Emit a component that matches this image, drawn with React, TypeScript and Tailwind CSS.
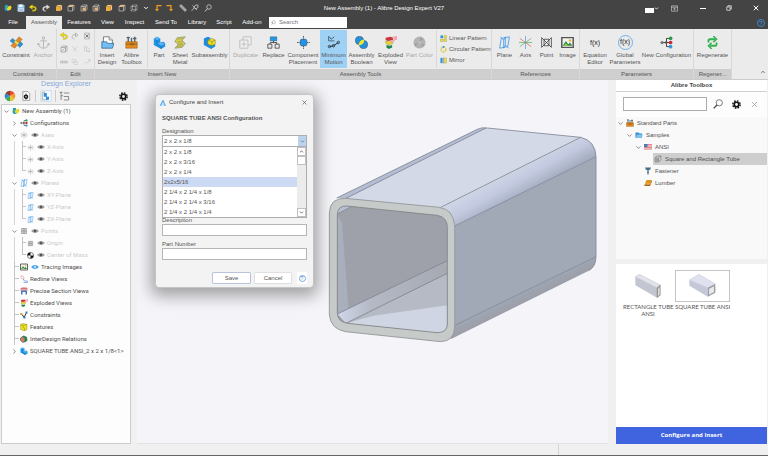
import type { ReactNode } from 'react'
import clsx from 'clsx'
import { ChevronDown, ChevronRight, ChevronUp, Search, X } from 'lucide-react'

type IconName = keyof typeof glyphs

const glyphs = {
  pie: (
    <>
      <path d="M8 8V1a7 7 0 0 1 6.1 3.5z" fill="#ef4a34" />
      <path d="M8 8l6.1-3.5a7 7 0 0 1 0 7z" fill="#f29a2e" />
      <path d="M8 8l6.1 3.5A7 7 0 0 1 8 15z" fill="#e2c92b" />
      <path d="M8 8v7a7 7 0 0 1-6.1-3.5z" fill="#3fae49" />
      <path d="M8 8l-6.1 3.5a7 7 0 0 1 0-7z" fill="#2c86d1" />
      <path d="M8 8L1.9 4.5A7 7 0 0 1 8 1z" fill="#8a3f2b" />
    </>
  ),
  app: (
    <>
      <path d="M2 2h6v4H6v4h3v4H4L1 11z" fill="#2196d8" />
      <path d="M8 5l5-2 2 4-2 5-5 1-3-3z" fill="#ead92c" />
      <path d="M3 5l4-1v4l-4 2z" fill="#43b26b" />
    </>
  ),
  gear: (
    <>
      <circle cx="8" cy="8" r="6.5" fill="none" stroke="#111" strokeWidth="2.6" strokeDasharray="2.900 2.205" />
      <circle cx="8" cy="8" r="4" fill="none" stroke="#111" strokeWidth="3" />
    </>
  ),
  save: (
    <>
      <path d="M1 1h12l2 2v12H1z" fill="#8fc3f2" />
      <path d="M4 1h7v5H4z" fill="#eef6ff" />
      <path d="M3 9h10v6H3z" fill="#fff" />
      <path d="M4 11h8M4 13h8" stroke="#5289bd" />
    </>
  ),
  undo: <path d="M7 1v3c5 0 8 2 8 6 0 3-3 5-8 5v-3c3 0 5-1 5-3s-2-2-5-2v4L0 6z" fill="#eadb16" stroke="#978b12" strokeWidth=".6" />,
  redo: <path d="M9 1v3C4 4 1 6 1 10c0 3 2 5 6 5v-2c-2 0-3-1-3-3s2-3 5-3v4l7-5z" fill="#ddd" stroke="#8a8a8a" strokeWidth=".6" />,
  redoDim: <path d="M9 2v3C4 5 2 7 2 10c0 2 2 4 5 4M9 2l5 4-5 4z" fill="none" stroke="#aaa" strokeWidth="1.5" />,
  cubeFull: (
    <>
      <path d="M2 5h9v9H2z" fill="#f0a93c" />
      <path d="M2 5l3-3h9l-3 3zM11 5l3-3v9l-3 3z" fill="#ffd58e" stroke="#a8763a" strokeWidth=".6" />
    </>
  ),
  cube: (
    <>
      <path d="M2 5h9v9H2zM2 5l3-3h9l-3 3M14 2v9l-3 3" fill="none" stroke="#ccc" strokeWidth="1.3" />
      <path d="M5 7h6v6H5z" fill="#eab676" />
    </>
  ),
  cubeTop: (
    <>
      <path d="M2 5h9v9H2zM14 2v9l-3 3" fill="none" stroke="#ccc" strokeWidth="1.3" />
      <path d="M2 5l3-3h9l-3 3z" fill="#f0b25a" stroke="#ddd" strokeWidth=".6" />
    </>
  ),
  cubeBack: <path d="M2 5h9v9H2zM2 5l3-3h9l-3 3M14 2v9l-3 3M5 2v9h9M5 11l-3 3" fill="none" stroke="#bdbdbd" strokeWidth="1.1" />,
  cornerL: (
    <>
      <path d="M15 3H6v8" fill="none" stroke="#ed9b23" strokeWidth="2.5" />
      <path d="M2 10l4 5 4-5z" fill="#ed9b23" />
    </>
  ),
  cornerR: (
    <>
      <path d="M1 3h9v8" fill="none" stroke="#ed9b23" strokeWidth="2.5" />
      <path d="M6 10l4 5 4-5z" fill="#ed9b23" />
    </>
  ),
  ruler: <path d="M1 4l3-3 11 11-3 3zM5 6l2-2M8 9l2-2M11 12l2-2" fill="#999" stroke="#ddd" />,
  probe: <path d="M9 2h5v5l-5 3-3-3zM6 8l-5 6M3 3l9 9" fill="none" stroke="#ccc" strokeWidth="1.6" />,
  loupe: (
    <>
      <circle cx="10" cy="6" r="4.5" fill="none" stroke="#ccc" strokeWidth="1.6" />
      <path d="M7 9l-5 6" stroke="#ccc" strokeWidth="2" />
    </>
  ),
  find: (
    <>
      <circle cx="10" cy="6" r="5" fill="none" stroke="#555" strokeWidth="1.2" />
      <path d="M6.500 9.500L1 15" stroke="#444" strokeWidth="2" />
    </>
  ),
  constraint: (
    <>
      <path d="M11 1l4 3-4 5-4-3z" fill="#e08a2c" stroke="#9c5c18" strokeWidth=".5" />
      <path d="M5 8l4 3-3 4-5-3z" fill="#e08a2c" stroke="#9c5c18" strokeWidth=".5" />
      <path d="M0 6l3-3 4 3-3 3z" fill="#2f8fd4" stroke="#1b5e91" strokeWidth=".5" />
      <path d="M9 11l4-4 3 3-4 4z" fill="#2f8fd4" stroke="#1b5e91" strokeWidth=".5" />
      <path d="M6 6l4 4" stroke="#e8dc3a" strokeWidth="2.5" />
    </>
  ),
  anchor: (
    <g fill="none" stroke="#b3b3b3" strokeWidth="1.1">
      <circle cx="8" cy="2.5" r="1.5" />
      <path d="M8 4v11M4 6h8M1.500 9c.5 4 3 6 6.500 6s6-2 6.500-6M0 11l1.500-2L4 11M12 11l2.500-2L16 11" />
    </g>
  ),
  delBox: (
    <>
      <path d="M3 2h10v12H3z" fill="#e3e3e3" stroke="#999" />
      <path d="M5 5l6 6M11 5l-6 6" stroke="#555" strokeWidth="1.5" />
    </>
  ),
  link: (
    <g fill="none" stroke="#8a8a8a" strokeWidth="1.2">
      <path d="M2 5h9v9H2zM2 5l3-3h9v9l-3 3M11 5l3-3" />
      <path d="M4 12l5-5" />
    </g>
  ),
  cut: <path d="M3 3l9 10M12 3L4 13" stroke="#c2c2c2" strokeWidth="1.2" />,
  sheetDim: <path d="M3 2l4 2v7l6 3M3 2v9l10 3V8L7 4" fill="none" stroke="#bbb" />,
  dash: <path d="M1 6h14v4H1zM5 6v4M10 6v4" fill="#ddd" stroke="#aaa" />,
  copyDim: <path d="M2 3h7v6H2zM6 7h7v6H6z" fill="none" stroke="#c4c4c4" />,
  moveDim: <path d="M2 13l5-5 3 2 4-7M10 4l4-1v4" fill="none" stroke="#bbb" />,
  insert: (
    <>
      <path d="M3 1h7l4 4v7H3z" fill="#fff" stroke="#444" strokeWidth=".8" />
      <path d="M10 1v4h4" fill="#ddd" stroke="#444" strokeWidth=".6" />
      <path d="M1 7h6l1 2h8l-2 6H1z" fill="#74bdf2" stroke="#24567f" strokeWidth=".8" />
    </>
  ),
  toolbox: (
    <>
      <path d="M4 1v7M8 2v6M12 1v7M2 2h4M10 3h4" stroke="#53626e" strokeWidth="1.7" />
      <path d="M1 7h14v8H1z" fill="#e28b1e" stroke="#8d510b" strokeWidth=".6" />
      <path d="M1 10h14M7 9h3v2H7z" stroke="#7a4407" fill="#f7d26a" strokeWidth=".8" />
    </>
  ),
  part: (
    <>
      <path d="M1 3l4-2 4 2v5l4-1 2 2v4l-5 3-9-5z" fill="#1f93e3" />
      <path d="M1 3l4-2 4 2-4 2zM5 9l4-1 6 1-5 3z" fill="#57b3f2" />
      <path d="M5 5v5l5 3v3" fill="none" stroke="#1169ab" strokeWidth=".7" />
    </>
  ),
  metal: (
    <>
      <path d="M4 2l10-1-4 4 1 2 3 2-4 5-9 1 4-4-1-2-3-2z" fill="#d6d24a" stroke="#85846a" strokeWidth=".8" />
      <path d="M4 4l7-1M4 7l7-.5M5 9h6M4 11l7-.5M3 13l8-1" stroke="#85846a" strokeWidth=".6" />
    </>
  ),
  subasm: (
    <>
      <path d="M1 3l5-2 3 1v6l6 2v3l-5 3-9-5z" fill="#1d8ce0" />
      <path d="M6 5l5-2 4 2v5l-4 2-5-2z" fill="#f0e229" stroke="#7c750e" strokeWidth=".6" />
      <path d="M6 5l5 2 4-2M11 7v5" fill="none" stroke="#7c750e" strokeWidth=".7" />
    </>
  ),
  duplicate: (
    <g fill="#ededed" stroke="#bdbdbd" strokeWidth="1.1">
      <path d="M5 1h10v10H5z" />
      <path d="M1 5h10v10H1z" />
      <path d="M6 7v6M3 10h6" />
    </g>
  ),
  replace: (
    <>
      <path d="M8 5v4M4 11V8h8v3" fill="none" stroke="#555" strokeWidth="1.2" />
      <path d="M4 1h8v5H4z" fill="#2597e6" stroke="#1a4c70" strokeWidth=".5" />
      <path d="M1 10h5v5H1zM10 10h5v5h-5z" fill="#e8e8e8" stroke="#444" />
    </>
  ),
  placement: (
    <>
      <path d="M8 0v16M0 8h16" stroke="#333" strokeDasharray="2 1" />
      <path d="M5 4h6l1 1v6l-1 1H5l-1-1V5z" fill="#2494e2" stroke="#12517f" strokeWidth=".7" />
    </>
  ),
  motion: (
    <g fill="none" stroke="#24313b">
      <path d="M2 0v6h7M3 1l2 3 4-3" strokeWidth=".8" />
      <path d="M3 13l5-1 6-4" strokeWidth="1.2" />
      <circle cx="3" cy="13" r="1.5" />
      <circle cx="8" cy="12" r="1.5" />
      <circle cx="14" cy="8" r="1.5" />
    </g>
  ),
  boolean: (
    <>
      <circle cx="5.5" cy="5.5" r="5" fill="#2390dc" stroke="#173c59" strokeWidth=".6" />
      <circle cx="10.5" cy="10.5" r="5" fill="#2390dc" stroke="#173c59" strokeWidth=".6" />
      <path d="M10.500 5.500a5 5 0 0 1-5 5 5 5 0 0 1 5-5z" fill="#f3e629" stroke="#f3e629" strokeWidth="1.6" />
    </>
  ),
  exploded: (
    <>
      <path d="M2 2l6-1 3 1v3l-6 1-3-1z" fill="#c9353a" />
      <path d="M2 6l5 1 4-1v3l-5 2-4-2z" fill="#ecd628" stroke="#807217" strokeWidth=".4" />
      <path d="M3 11l4 1 3-1v3l-4 2-3-2z" fill="#22844c" />
      <path d="M9 9l6-7M11 2l4-1v4" fill="none" stroke="#f1a5ae" strokeWidth="2" />
    </>
  ),
  partColor: (
    <g stroke="#c9c9c9" strokeWidth=".6">
      <circle cx="8" cy="8" r="7.2" fill="#b1b1b1" />
      <path d="M8 8V1a7 7 0 0 1 6 4zM8 8l7 2a7 7 0 0 1-4 4.500zM8 8l-4 6a7 7 0 0 1-3-5z" fill="#9d9d9d" />
      <path d="M3 3l10 10M3 13L13 3" />
    </g>
  ),
  linear: (
    <>
      <path d="M1 1h6v6H1z" fill="#2f93dc" />
      <path d="M9 1h6v6H9zM1 9h6v6H1zM9 9h6v6H9z" fill="#e8dc4b" stroke="#8f8733" strokeWidth=".7" />
    </>
  ),
  circular: (
    <>
      <circle cx="8" cy="8" r="5.5" fill="none" stroke="#d9cd3a" strokeWidth="3.5" strokeDasharray="4 1.7" />
      <path d="M6 0h4v4H6z" fill="#3c8fcf" />
    </>
  ),
  mirror: (
    <>
      <path d="M1 2h5v12H1z" fill="#2f93dc" />
      <path d="M10 2h5v12h-5z" fill="#e8dc4b" stroke="#8f8733" strokeWidth=".6" />
      <path d="M8 1v14" stroke="#666" />
    </>
  ),
  plane: (
    <g fill="none" stroke="#4a9ce8" strokeWidth="1.1">
      <path d="M4 3l10-2-2 12-10 2z" />
      <path d="M3 1l4 4v10M13 15l-4-4V1M7 5l2-4M7 15l2-4" />
    </g>
  ),
  axis: (
    <>
      <path d="M8 0v16" stroke="#4d9de0" strokeWidth=".9" />
      <path d="M1 3l14 10" stroke="#dd5b4d" strokeWidth=".9" />
      <path d="M15 3L1 13M0 8h16" stroke="#61a861" strokeWidth=".9" />
    </>
  ),
  axisDim: <path d="M8 1v14M2 4l12 8M14 4L2 12M1 8h14" stroke="#a0a0a0" />,
  point: (
    <g fill="none" stroke="#333" strokeWidth=".9">
      <path d="M2 2l12 12M14 2L2 14" />
      <path d="M5 4h6v8H5zM2 2v12M14 2v12" />
    </g>
  ),
  pointDim: <path d="M3 3h10v10H3zM3 8h10M6.500 3v10M9.500 3v10" fill="#ddd" stroke="#888" strokeWidth="1.2" />,
  image: (
    <>
      <path d="M1 2h14v12H1z" fill="#f4f4f4" stroke="#555" strokeWidth="1.8" />
      <path d="M2 12l4-6 3 4 2-2 3 4z" fill="#2b8b44" />
      <path d="M3 12l3-3 3 3z" fill="#9fcd54" />
      <circle cx="11" cy="5.5" r="1.5" fill="#efb31d" />
    </>
  ),
  config: (
    <>
      <path d="M3 8h9M12 3H8v10h4" fill="none" stroke="#222" />
      <circle cx="2.5" cy="8" r="2" fill="#777" />
      <circle cx="7.5" cy="8" r="1.6" fill="#555" />
      <circle cx="13" cy="2.8" r="2.3" fill="#2d9a46" />
      <circle cx="13" cy="8" r="2.3" fill="#c92a3d" />
      <circle cx="13" cy="13.2" r="2.3" fill="#3896dd" />
    </>
  ),
  regen: (
    <g fill="none" stroke="#2fb14b" strokeWidth="2.2">
      <path d="M3 8V6q0-2 2-2h6M13 8v2q0 2-2 2H5" />
      <path d="M9 0l4 4-4 3.500M7 16l-4-4 4-3.500" strokeWidth="1.8" />
    </g>
  ),
  sheet: (
    <>
      <path d="M3 1h8l3 3v11H3z" fill="#fff" stroke="#666" strokeWidth=".9" />
      <circle cx="8" cy="9" r="2.5" fill="none" stroke="#111" strokeWidth="2.2" />
      <path d="M8 4v10" stroke="#111" />
    </>
  ),
  panelTree: (
    <>
      <path d="M1 1h14v14H1z" fill="#f4faff" stroke="#bbd6ec" />
      <path d="M3 3v10h7M3 3h4" fill="none" stroke="#999" />
      <path d="M5 4h4v5H5zM8 9h4v4H8z" fill="#2d8bd8" />
    </>
  ),
  treeList: <path d="M1 2h4M3 2v11M3 7h3M7 3h8M7 8h7M7 13h7M14 8v5" fill="none" stroke="#8b8b8b" strokeWidth="1.5" />,
  eye: (
    <>
      <path d="M0 8q8-8 16 0-8 8-16 0z" fill="#a0a0a0" />
      <circle cx="8" cy="8" r="2.5" fill="#555" />
    </>
  ),
  eyeBlue: (
    <>
      <path d="M0 8q8-8 16 0-8 8-16 0z" fill="#45a3f0" />
      <circle cx="8" cy="8" r="2" fill="#dff0ff" />
    </>
  ),
  mass: (
    <>
      <circle cx="8" cy="8" r="7" fill="#fff" stroke="#111" strokeWidth="1.2" />
      <path d="M8 8V1a7 7 0 0 0-7 7zM8 8v7a7 7 0 0 0 7-7z" fill="#111" />
    </>
  ),
  redline: (
    <>
      <path d="M2 1l5 2 1 6-6-3z" fill="none" stroke="#e99aa6" strokeWidth="1.3" />
      <path d="M6 8l3 4h6v3H7" fill="none" stroke="#6d98d6" strokeWidth="1.5" />
    </>
  ),
  section: (
    <>
      <path d="M1 3l3-2h9l2 2v4H1z" fill="#d96e7c" />
      <path d="M2 7h12v8h-3v-5H5v5H2z" fill="#4a78b8" />
      <path d="M2 5h12" stroke="#f5d0d4" />
    </>
  ),
  mates: (
    <>
      <path d="M1 6l4 2 3 5 5-10" fill="none" stroke="#333" strokeWidth="2" />
      <path d="M1 4h4v4H1z" fill="#e09c2c" />
      <path d="M11 1h4v4h-4zM7 11h4v4H7z" fill="#377fbd" />
    </>
  ),
  feature: (
    <>
      <path d="M1 3l5-2 8 2v10l-5 3-8-3z" fill="#ece222" stroke="#827b12" strokeWidth=".8" />
      <path d="M1 3l5 2v4l3 1v6M6 5l8-2" fill="none" stroke="#827b12" strokeWidth=".8" />
    </>
  ),
  relations: (
    <>
      <path d="M2 6l5-5 7 3 1 7-5 4z" fill="#288a55" />
      <path d="M1 6l5-3 4 4v6l-4 2-5-4z" fill="#d5824c" stroke="#34588a" strokeWidth="1.3" />
    </>
  ),
  folder: (
    <>
      <path d="M1 3h6l2 2h5v9H1z" fill="#318ed1" />
      <path d="M1 14l3-7h12l-3 7z" fill="#7fc1ef" />
    </>
  ),
  flag: (
    <>
      <path d="M0 2h16v12H0z" fill="#f7dfe0" />
      <path d="M0 3h16M0 6h16M0 9h16M0 12h16" stroke="#db6b74" strokeWidth="1.5" />
      <path d="M0 2h7v6H0z" fill="#5279b5" />
    </>
  ),
  tube: (
    <g fill="none" stroke="#777" strokeWidth="1.2">
      <path d="M2 6l4-4h8v8l-5 4H2z" />
      <path d="M2 6h7v8M9 6l5-4M4 8h3v4H4z" />
    </g>
  ),
  bolt: (
    <>
      <path d="M2 1h12l-2 5H4z" fill="#4a7185" />
      <path d="M6 6h4v9H6z" fill="#93adb9" />
      <path d="M6 8h4M6 10h4M6 12h4" stroke="#4a7185" />
    </>
  ),
  lumber: (
    <>
      <path d="M5 2h11l-4 9H1z" fill="#eaa52c" />
      <path d="M1 11h11l4-9v3l-4 9H1z" fill="#a4620d" />
      <path d="M4 6h9M5 4h9" stroke="#b87513" />
    </>
  ),
  ribbonToggle: (
    <>
      <path d="M1 2h14v12H1z" fill="none" stroke="#ddd" strokeWidth="1.4" />
      <path d="M1 5h14M8 12V7M5 9.500L8 7l3 2.500" fill="none" stroke="#ddd" strokeWidth="1.3" />
    </>
  ),
  restore: <path d="M2 5h9v9H2zM5 5V2h9v9h-3" fill="none" stroke="#fff" strokeWidth="1.8" />
}

function Icon({ name, size = 'size-[8px]', className }: { name: IconName; size?: string; className?: string }) {
  return (
    <svg viewBox="0 0 16 16" className={clsx('shrink-0', size, className)} aria-hidden="true">
      {glyphs[name]}
    </svg>
  )
}

const quickAccess: IconName[] = ['app', 'save', 'undo', 'redo', 'cubeFull', 'cubeTop', 'cube', 'cube', 'cubeFull', 'cubeTop', 'cubeBack']
const quickTools: IconName[] = ['cornerL', 'cornerR', 'ruler', 'probe', 'loupe']

const tabs = [
  { label: 'File', width: 'w-[26px]' },
  { label: 'Assembly', width: 'w-[36px]', active: true },
  { label: 'Features', width: 'w-[34px]' },
  { label: 'View', width: 'w-[23px]' },
  { label: 'Inspect', width: 'w-[31px]' },
  { label: 'Send To', width: 'w-[32px]' },
  { label: 'Library', width: 'w-[30px]' },
  { label: 'Script', width: 'w-[24px]' },
  { label: 'Add-on', width: 'w-[32px]' }
]

function TitleBar() {
  return (
    <header className="bg-[#444444] text-[6px] text-white">
      <div className="relative flex h-4 items-center justify-between pl-1 pr-2">
        <div className="flex w-[208px] items-center justify-between">
          {quickAccess.map((name, i) => (
            <button type="button" key={i} aria-label={name}>
              <Icon name={name} />
            </button>
          ))}
          <ChevronDown className="size-[6px]" strokeWidth={4} />
          {quickTools.map(name => (
            <button type="button" key={name} aria-label={name}>
              <Icon name={name} />
            </button>
          ))}
        </div>
        <h1 className="absolute left-1/2 -translate-x-1/2 whitespace-nowrap">New Assembly (1) - Alibre Design Expert V27</h1>
        <div className="flex items-center">
          <span className="mt-1 h-[5px] w-[9px] bg-white" />
          <ChevronDown className="mr-3 size-[5px]" strokeWidth={4} />
          <Icon name="ribbonToggle" size="size-[7px]" className="mr-[22px]" />
          <button type="button" aria-label="Minimize" className="mr-5 h-px w-[6px] bg-white" />
          <button type="button" aria-label="Restore" className="mr-5">
            <Icon name="restore" size="size-[6px]" />
          </button>
          <button type="button" aria-label="Close">
            <X className="size-2" strokeWidth={3} />
          </button>
        </div>
      </div>
      <nav className="flex h-[13px] items-stretch">
        {tabs.map(tab => (
          <button
            type="button"
            key={tab.label}
            className={clsx('shrink-0 text-center leading-[13px]', tab.width, tab.active && 'bg-[#ebebeb] text-[#555555]')}
          >
            {tab.label}
          </button>
        ))}
        <label className="my-px ml-px flex w-[78px] items-center gap-[3px] bg-white px-[2px]">
          <Search className="size-[5px] shrink-0 -scale-x-100 text-[#777777]" strokeWidth={2} />
          <input placeholder="Search" aria-label="Search" className="w-full min-w-0 outline-none placeholder:text-[#777777]" />
        </label>
        <button
          type="button"
          aria-label="Help"
          className="my-auto ml-auto mr-[3px] size-2 rounded-full border border-[#3f86c8] text-center leading-[6px] text-[#3f9cf0]"
        >
          ?
        </button>
      </nav>
    </header>
  )
}

interface ToolProps {
  icon?: IconName
  label: string
  width: string
  tone?: 'dim' | 'active'
  children?: ReactNode
}

function Tool({ icon, label, width, tone, children }: ToolProps) {
  return (
    <button
      type="button"
      className={clsx(
        'flex shrink-0 flex-col items-center gap-[2px] pt-[5px] leading-[7px]',
        width,
        tone === 'dim' ? 'text-[#a8a8a8]' : 'text-[#555555]',
        tone === 'active' && 'bg-[#9fd1f5]'
      )}
    >
      {icon ? <Icon name={icon} size="size-[13px]" className="my-px" /> : children}
      <span className="whitespace-pre text-center">{label}</span>
    </button>
  )
}

function Group({ title, width, children }: { title: string; width: string; children: ReactNode }) {
  return (
    <section className={clsx('flex shrink-0 flex-col border-r border-[#d8d8d8]', width)}>
      <div className="flex h-10 items-stretch pb-px pt-px">{children}</div>
      <h2 className="h-[10px] bg-[#cfcfcf] text-center leading-[10px] text-[#555555]">{title}</h2>
    </section>
  )
}

const editIcons: IconName[] = ['undo', 'redoDim', 'delBox', 'link', 'cut', 'sheetDim', 'dash', 'copyDim', 'moveDim']

const patterns: { icon: IconName; label: string }[] = [
  { icon: 'linear', label: 'Linear Pattern' },
  { icon: 'circular', label: 'Circular Pattern' },
  { icon: 'mirror', label: 'Mirror' }
]

function Ribbon() {
  return (
    <div className="flex bg-[#ebebeb] text-[6px]">
      <Group title="Constraints" width="w-[57px]">
        <Tool icon="constraint" label="Constraint" width="w-[32px]" />
        <Tool icon="anchor" label="Anchor" width="w-[22px]" tone="dim" />
      </Group>
      <Group title="Edit" width="w-[38px]">
        <div className="grid w-full grid-cols-3 place-items-center px-px">
          {editIcons.map(name => (
            <button type="button" key={name} aria-label={name}>
              <Icon name={name} />
            </button>
          ))}
        </div>
      </Group>
      <Group title="Insert New" width="w-[135px]">
        <Tool icon="insert" label={'Insert\nDesign'} width="w-[24px]" />
        <Tool icon="toolbox" label={'Alibre\nToolbox'} width="w-[25px]" />
        <span className="ml-[3px] w-px bg-[#d8d8d8]" />
        <Tool icon="part" label="Part" width="w-[22px]" />
        <Tool icon="metal" label={'Sheet\nMetal'} width="w-[20px]" />
        <Tool icon="subasm" label="Subassembly" width="w-[39px]" />
      </Group>
      <Group title="Assembly Tools" width="w-[262px]">
        <Tool icon="duplicate" label="Duplicate" width="w-[31px]" tone="dim" />
        <Tool icon="replace" label="Replace" width="w-[25px]" />
        <Tool icon="placement" label={'Component\nPlacement'} width="w-[34px]" />
        <Tool icon="motion" label={'Minimum\nMotion'} width="w-[27px]" tone="active" />
        <Tool icon="boolean" label={'Assembly\nBoolean'} width="w-[29px]" />
        <Tool icon="exploded" label={'Exploded\nView'} width="w-[29px]" />
        <Tool icon="partColor" label="Part Color" width="w-[29px]" tone="dim" />
        <span className="ml-[2px] mr-[3px] w-px bg-[#d8d8d8]" />
        <div className="flex flex-col justify-between py-1">
          {patterns.map(p => (
            <button type="button" key={p.icon} className="flex items-center gap-[2px] whitespace-nowrap leading-2 text-[#555555]">
              <Icon name={p.icon} size="size-[7px]" />
              {p.label}
            </button>
          ))}
        </div>
      </Group>
      <Group title="References" width="w-[88px]">
        <span className="w-[2px]" />
        <Tool icon="plane" label="Plane" width="w-[21px]" />
        <Tool icon="axis" label="Axis" width="w-[21px]" />
        <Tool icon="point" label="Point" width="w-[21px]" />
        <Tool icon="image" label="Image" width="w-[21px]" />
      </Group>
      <Group title="Parameters" width="w-[114px]">
        <Tool label={'Equation\nEditor'} width="w-[30px]">
          <span className="h-[15px] text-[7px] leading-[15px] text-[#222222]">f(x)</span>
        </Tool>
        <Tool label={'Global\nParameters'} width="w-[30px]">
          <span className="size-[15px] rounded-full border border-[#6db3ec] text-[7px] leading-[12px] text-[#222222]">f(x)</span>
        </Tool>
        <Tool icon="config" label="New Configuration" width="w-[53px]" />
      </Group>
      <Group title="Regener..." width="w-[38px]">
        <Tool icon="regen" label="Regenerate" width="w-[37px]" />
      </Group>
      <button type="button" aria-label="Collapse ribbon" className="ml-auto mr-[2px] self-end pb-1">
        <ChevronUp className="size-[6px] text-[#555555]" strokeWidth={3} />
      </button>
    </div>
  )
}

interface TreeItem {
  label: string
  icon: IconName
  level: 0 | 1 | 2
  toggle?: 'open' | 'closed'
  eye?: 'eye' | 'eyeBlue'
  dim?: boolean
  last?: boolean
}

const explorerItems: TreeItem[] = [
  { label: 'New Assembly (1)', icon: 'app', level: 0, toggle: 'open' },
  { label: 'Configurations', icon: 'config', level: 1, toggle: 'closed' },
  { label: 'Axes', icon: 'axisDim', level: 1, toggle: 'open', eye: 'eye', dim: true },
  { label: 'X-Axis', icon: 'axisDim', level: 2, eye: 'eye', dim: true },
  { label: 'Y-Axis', icon: 'axisDim', level: 2, eye: 'eye', dim: true },
  { label: 'Z-Axis', icon: 'axisDim', level: 2, eye: 'eye', dim: true, last: true },
  { label: 'Planes', icon: 'plane', level: 1, toggle: 'open', eye: 'eye', dim: true },
  { label: 'XY-Plane', icon: 'plane', level: 2, eye: 'eye', dim: true },
  { label: 'YZ-Plane', icon: 'plane', level: 2, eye: 'eye', dim: true },
  { label: 'ZX-Plane', icon: 'plane', level: 2, eye: 'eye', dim: true, last: true },
  { label: 'Points', icon: 'pointDim', level: 1, toggle: 'open', eye: 'eye', dim: true },
  { label: 'Origin', icon: 'pointDim', level: 2, eye: 'eye', dim: true },
  { label: 'Center of Mass', icon: 'mass', level: 2, eye: 'eye', dim: true, last: true },
  { label: 'Tracing Images', icon: 'image', level: 1, eye: 'eyeBlue' },
  { label: 'Redline Views', icon: 'redline', level: 1 },
  { label: 'Precise Section Views', icon: 'section', level: 1 },
  { label: 'Exploded Views', icon: 'exploded', level: 1 },
  { label: 'Constraints', icon: 'mates', level: 1 },
  { label: 'Features', icon: 'feature', level: 1 },
  { label: 'InterDesign Relations', icon: 'relations', level: 1 },
  { label: 'SQUARE TUBE ANSI_2 x 2 x 1/8<1>', icon: 'part', level: 1, toggle: 'closed' }
]

function Toggle({ state }: { state: 'open' | 'closed' }) {
  const Chevron = state === 'open' ? ChevronDown : ChevronRight
  return <Chevron className="size-[7px] shrink-0 text-[#666666]" strokeWidth={2.5} />
}

function ExplorerRow({ item }: { item: TreeItem }) {
  return (
    <li className="flex h-3 items-center whitespace-nowrap">
      {item.level > 0 && <span className="w-[8px] shrink-0" />}
      {item.level === 2 && <span className="mr-[3px] h-full w-[5px] shrink-0 border-r border-[#d6d6d6]" />}
      {item.level === 2 ? (
        <span className="flex h-full w-[8px] shrink-0 flex-col pl-[4px]">
          <span className="h-[6px] border-b border-l border-[#c4c4c4]" />
          {!item.last && <span className="h-[6px] border-l border-[#c4c4c4]" />}
        </span>
      ) : (
        <span className="flex w-[9px] shrink-0 items-center justify-center self-stretch">
          {item.toggle ? (
            <Toggle state={item.toggle} />
          ) : (
            <span className="flex h-full w-full flex-col pl-1">
              <span className="h-[6px] border-b border-l border-[#c4c4c4]" />
              <span className="h-[6px] border-l border-[#c4c4c4]" />
            </span>
          )}
        </span>
      )}
      <Icon name={item.icon} size={item.level === 2 ? 'size-[7px]' : 'size-[8px]'} className="mr-[2px] ml-px" />
      {item.eye && <Icon name={item.eye} className="mx-px" />}
      <span className={clsx(item.eye && 'pl-px', item.dim ? 'text-[#cccccc]' : 'text-[#505050]')}>{item.label}</span>
    </li>
  )
}

function DesignExplorer() {
  return (
    <aside className="flex w-[131px] shrink-0 flex-col pl-px">
      <h2 className="h-2 text-center text-[7px] leading-2 text-[#85a8d8]">Design Explorer</h2>
      <div className="flex h-4 items-center pl-[3px] pr-[3px]">
        <button type="button" aria-label="Colors">
          <Icon name="pie" size="size-3" />
        </button>
        <button type="button" aria-label="Sheet" className="ml-[5px]">
          <Icon name="sheet" size="size-[10px]" />
        </button>
        <span className="mx-1 h-3 w-px bg-[#cccccc]" />
        <button type="button" aria-label="Panel">
          <Icon name="panelTree" size="size-[12px]" />
        </button>
        <span className="mx-[3px] h-3 w-px bg-[#cccccc]" />
        <button type="button" aria-label="Tree">
          <Icon name="treeList" size="size-[11px]" />
        </button>
        <button type="button" aria-label="Explorer settings" className="ml-auto">
          <Icon name="gear" size="size-[9px]" />
        </button>
      </div>
      <ul className="flex-1 border border-[#cccccc] bg-[#fdfdfd] font-['Roboto',sans-serif] text-[6px] leading-3">
        {explorerItems.map(item => (
          <ExplorerRow key={item.label} item={item} />
        ))}
      </ul>
    </aside>
  )
}

function TubeModel() {
  return (
    <svg viewBox="0 0 870 720" className="absolute left-[183px] top-[30px] w-[290px]" role="img" aria-label="Square tube">
      <defs>
        <linearGradient id="corner" gradientUnits="userSpaceOnUse" x1="570" y1="180" x2="610" y2="252">
          <stop offset="0" stopColor="#cfd6e6" />
          <stop offset=".5" stopColor="#c3cae0" />
          <stop offset="1" stopColor="#a6afc2" />
        </linearGradient>
        <linearGradient id="under" gradientUnits="userSpaceOnUse" x1="600" y1="540" x2="622" y2="584">
          <stop offset="0" stopColor="#a0a8b7" />
          <stop offset="1" stopColor="#9a9ca3" />
        </linearGradient>
        <linearGradient id="innerEdge" x1="0" y1="0" x2="1" y2="0">
          <stop offset="0" stopColor="#d0d7ea" />
          <stop offset=".3" stopColor="#b4b9c6" />
          <stop offset="1" stopColor="#a6a9b2" />
        </linearGradient>
        <clipPath id="opening">
          <path d="M52 315Q52 287 80 288L352 316Q382 322 382 352V642Q382 668 352 668L82 640Q52 634 52 608z" />
        </clipPath>
      </defs>
      <path d="M50 264L472 58Q485 51 502 54L90 268z" fill="#b4bdd2" />
      <path d="M76 266L498 54L782 82L362 292z" fill="#d3d9e7" />
      <path d="M362 292L782 82Q826 92 828 140L404 348Q398 300 362 292z" fill="url(#corner)" />
      <path d="M404 348L828 140V440L404 646z" fill="#a1a8b6" />
      <path d="M404 646L828 440Q828 470 806 482L392 688z" fill="url(#under)" />
      <g fill="none" stroke="#7f8695" strokeWidth="2.5">
        <path d="M50 264L472 58Q485 51 502 54L782 82Q826 92 828 140V440Q828 470 806 482" />
        <path d="M76 266L498 54M362 292L782 82M404 348L828 140M404 646L828 440" />
      </g>
      <path
        d="M28 308Q30 264 76 265L358 292Q400 298 404 348V648Q404 694 362 695L76 665Q30 656 28 612z"
        fill="#c6cac9"
        stroke="#8d9293"
        strokeWidth="2.5"
      />
      <g clipPath="url(#opening)">
        <path d="M50 280H390V680H50z" fill="#9ea1a9" />
        <path d="M50 310L66 340L86 600L50 614z" fill="#a9afbc" />
        <path d="M52 612L382 452V490L78 640z" fill="url(#innerEdge)" />
        <path d="M78 640L382 490V680H78z" fill="#b5bac5" />
        <path d="M78 640L160 617L382 586V680H78z" fill="#cfd5e2" />
        <path d="M52 280H94V290L52 312z" fill="#b8c1d4" />
        <path d="M52 312L94 290M52 612L382 452M78 640L382 490" fill="none" stroke="#81858e" strokeWidth="2.5" />
      </g>
      <path
        d="M52 315Q52 287 80 288L352 316Q382 322 382 352V642Q382 668 352 668L82 640Q52 634 52 608z"
        fill="none"
        stroke="#7d8284"
        strokeWidth="2.5"
      />
    </svg>
  )
}

const designations = ['2 x 2 x 1/8', '2 x 2 x 3/16', '2 x 2 x 1/4', '2x2x5/16', '2 1/4 x 2 1/4 x 1/8', '2 1/4 x 2 1/4 x 3/16', '2 1/4 x 2 1/4 x 1/4']

function ConfigureDialog() {
  return (
    <form className="absolute left-[18px] top-[14px] w-[159px] rounded-[4px] border border-[#c4c4c4] bg-[#f3f3f3] text-[6px] text-[#555555] shadow-[0_4px_16px_4px_rgba(0,0,0,0.35)]">
      <div className="flex h-[15px] items-center gap-[2px] pl-[3px] pr-[5px] text-[#444444]">
        <svg viewBox="0 0 16 16" className="size-[8px]" aria-hidden="true">
          <path d="M1 14L7 2h2l5 12h-3L8 6l-4 8z" fill="#5daef0" />
          <path d="M6 10h4l1 3H5z" fill="#b5daf8" />
        </svg>
        <span>Configure and Insert</span>
        <button type="button" aria-label="Close dialog" className="ml-auto">
          <X className="size-[7px]" strokeWidth={2} />
        </button>
      </div>
      <div className="flex flex-col px-[6px] pb-[3px] pt-1">
        <h3 className="mb-[5px] h-2 font-bold leading-2">SQUARE TUBE ANSI Configuration</h3>
        <label htmlFor="designation" className="leading-2">
          Designation
        </label>
        <div className="relative mb-[69px] flex h-3 border border-[#adadad] bg-white">
          <select id="designation" className="w-full appearance-none pl-px leading-[10px] outline-none">
            <option>2 x 2 x 1/8</option>
          </select>
          <span className="flex w-2 shrink-0 items-center justify-center bg-[#bcd3ee]">
            <ChevronDown className="size-[5px]" strokeWidth={3} />
          </span>
          <div className="absolute -left-px -right-px top-[10px] flex border border-[#adadad] bg-white">
            <ul role="listbox" aria-label="Designation" className="flex-1">
              {designations.map(d => (
                <li
                  key={d}
                  role="option"
                  aria-selected={d === '2x2x5/16'}
                  className={clsx('h-[10px] pl-px leading-[10px]', d === '2x2x5/16' && 'bg-[#cddaf3]')}
                >
                  {d}
                </li>
              ))}
            </ul>
            <div className="flex w-[9px] flex-col bg-[#ececec]">
              <span className="flex h-[9px] items-center justify-center border border-[#c0c0c0] bg-white">
                <ChevronUp className="size-[5px]" strokeWidth={4} />
              </span>
              <span className="mb-auto h-[9px] border border-[#c0c0c0] bg-white" />
              <span className="flex h-[9px] items-center justify-center border border-[#c0c0c0] bg-white">
                <ChevronDown className="size-[5px]" strokeWidth={4} />
              </span>
            </div>
          </div>
        </div>
        <label htmlFor="description" className="leading-2">
          Description
        </label>
        <input id="description" className="mb-1 h-3 border border-[#b5b5b5] bg-white px-px outline-none" />
        <label htmlFor="part-number" className="leading-2">
          Part Number
        </label>
        <input id="part-number" className="h-3 border border-[#b5b5b5] bg-white px-px outline-none" />
        <div className="mt-3 flex h-3 items-stretch justify-end gap-[3px] leading-[10px]">
          <button type="button" className="w-[39px] rounded-[1px] border border-[#b9c4dc] bg-white">
            Save
          </button>
          <button type="button" className="w-[38px] rounded-[1px] border border-[#e0e0e0] bg-white">
            Cancel
          </button>
          <button type="button" aria-label="Dialog help" className="ml-[2px] flex w-[10px] items-center justify-center bg-white">
            <span className="size-[7px] rounded-full border border-[#78a8e0] text-[5px] leading-[5px] text-[#3b7fd0]">?</span>
          </button>
        </div>
      </div>
    </form>
  )
}

const toolboxItems: { label: string; icon: IconName; indent: string; open?: boolean; selected?: boolean }[] = [
  { label: 'Standard Parts', icon: 'toolbox', indent: 'pl-[1px]', open: true },
  { label: 'Samples', icon: 'folder', indent: 'pl-[10px]', open: true },
  { label: 'ANSI', icon: 'flag', indent: 'pl-[19px]', open: true },
  { label: 'Square and Rectangle Tube', icon: 'tube', indent: 'pl-[1px]', selected: true },
  { label: 'Fastener', icon: 'bolt', indent: 'pl-[28px]' },
  { label: 'Lumber', icon: 'lumber', indent: 'pl-[28px]' }
]

function AlibreToolbox() {
  return (
    <aside className="flex w-[152px] shrink-0 flex-col pr-px">
      <h2 className="h-3 border-b border-[#d0d0d0] bg-white text-center text-[6px] font-bold leading-[11px] text-[#444444]">Alibre Toolbox</h2>
      <div className="flex items-center bg-[#fdfdfd] pb-[6px] pl-[7px] pr-[8px] pt-[5px]">
        <input aria-label="Search toolbox" className="h-[14px] w-[84px] border border-[#adadad] bg-white px-1 text-[6px] outline-none" />
        <button type="button" aria-label="Find" className="ml-[6px]">
          <Icon name="find" size="size-[10px]" />
        </button>
        <button type="button" aria-label="Toolbox settings" className="mx-auto">
          <Icon name="gear" size="size-[9px]" />
        </button>
        <button type="button" aria-label="Close toolbox">
          <X className="size-[9px] text-[#999999]" strokeWidth={2} />
        </button>
      </div>
      <ul className="h-[142px] bg-[#f9f9f9] text-[6px] leading-3 text-[#505050]">
        {toolboxItems.map(item => (
          <li
            key={item.label}
            className={clsx('flex h-3 items-center', item.indent, item.selected && 'ml-[37px] bg-[#cecece]')}
          >
            {item.open && (
              <span className="mr-[2px]">
                <Toggle state="open" />
              </span>
            )}
            <Icon name={item.icon} className="mr-[3px]" />
            {item.label}
          </li>
        ))}
      </ul>
      <div className="mt-[5px] flex flex-1 items-start gap-[2px] bg-white px-[7px] pt-[6px] font-['Lato',sans-serif] text-[6px] leading-[7px] text-[#555555]">
        <button type="button" className="w-[50px] whitespace-nowrap">
          <span className="mb-px flex h-[32px] items-center justify-center">
            <svg viewBox="0 0 78 72" className="w-[26px]" aria-hidden="true">
              <path d="M1 8L13 1l63 32-10 8z" fill="#e1e3ed" stroke="#a6a9b4" />
              <path d="M1 8l65 33v30L1 34z" fill="#c3c6d0" />
              <path d="M66 41l10-8v31l-10 7z" fill="#999" stroke="#777" />
              <path d="M69 44l5-4v22l-5 4z" fill="#ddd" />
            </svg>
          </span>
          RECTANGLE TUBE
          <br />
          ANSI
        </button>
        <button type="button" className="whitespace-nowrap">
          <span className="mb-px flex h-[32px] items-center justify-center border border-[#c4c4c4]">
            <svg viewBox="0 0 82 70" className="w-[27px]" aria-hidden="true">
              <path d="M1 18L30 1l50 29-23 12z" fill="#dfe1ee" stroke="#b3b6c4" />
              <path d="M1 18l56 24v27L1 36z" fill="#c5c8d8" />
              <path d="M57 42l23-12v27L57 69z" fill="#999ca3" />
              <path d="M61 45l15-8v18l-15 8z" fill="#e9e9e9" />
            </svg>
          </span>
          SQUARE TUBE ANSI
        </button>
      </div>
      <button type="button" className="h-[17px] bg-[#4063df] font-['Open_Sans',sans-serif] text-[6px] font-bold text-white">
        Configure and Insert
      </button>
    </aside>
  )
}

export default function App() {
  return (
    <div className="flex min-h-screen flex-col bg-[#f0f0f0] font-['Liberation_Sans',sans-serif]">
      <TitleBar />
      <Ribbon />
      <div className="flex flex-1 border-t border-[#cccccc]">
        <DesignExplorer />
        <main className="relative ml-[6px] mr-2 flex-1 overflow-hidden border-b border-[#e2e2e2] bg-[#f5f5f9]">
          <TubeModel />
          <ConfigureDialog />
        </main>
        <AlibreToolbox />
      </div>
      <footer className="flex h-3 items-stretch justify-end border-b border-[#666666]">
        <div className="w-[210px] border-l border-[#d5d5d5]" />
      </footer>
    </div>
  )
}
